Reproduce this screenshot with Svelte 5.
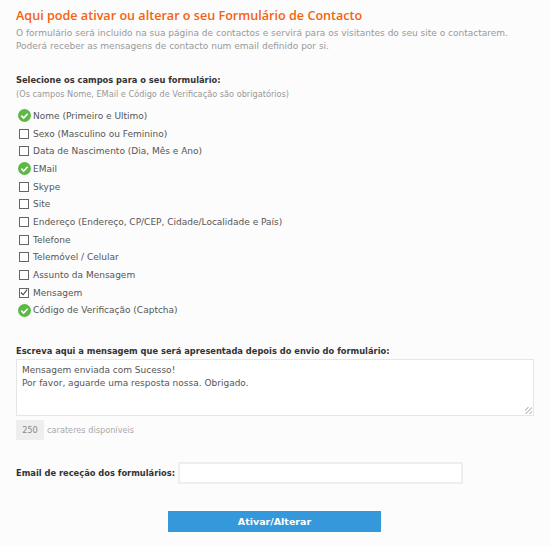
<script>
  const fields = [
    { label: "Nome (Primeiro e Ultimo)", state: "required" },
    { label: "Sexo (Masculino ou Feminino)", state: "off" },
    { label: "Data de Nascimento (Dia, Mês e Ano)", state: "off" },
    { label: "EMail", state: "required" },
    { label: "Skype", state: "off" },
    { label: "Site", state: "off" },
    { label: "Endereço (Endereço, CP/CEP, Cidade/Localidade e País)", state: "off" },
    { label: "Telefone", state: "off" },
    { label: "Telemóvel / Celular", state: "off" },
    { label: "Assunto da Mensagem", state: "off" },
    { label: "Mensagem", state: "on" },
    { label: "Código de Verificação (Captcha)", state: "required" }
  ];
  let message = "Mensagem enviada com Sucesso!\nPor favor, aguarde uma resposta nossa. Obrigado.";
</script>

<div class="page">
  <h1>Aqui pode ativar ou alterar o seu Formulário de Contacto</h1>
  <p class="intro">
    O formulário será incluido na sua página de contactos e servirá para os visitantes do seu site o contactarem.<br />
    Poderá receber as mensagens de contacto num email definido por si.
  </p>

  <h2>Selecione os campos para o seu formulário:</h2>
  <p class="note">(Os campos Nome, EMail e Código de Verificação são obrigatórios)</p>

  <ul>
    {#each fields as f}
      <li>
        <span class="mark">
          {#if f.state === "required"}
            <svg width="13" height="13" viewBox="0 0 14 14">
              <circle cx="7" cy="7" r="7" fill="#5cb947" />
              <path d="M3.6 7.2l2.5 2.5 4.3-4.6" fill="none" stroke="#fff" stroke-width="1.8" />
            </svg>
          {:else}
            <span class="box">
              {#if f.state === "on"}
                <svg width="9" height="9" viewBox="0 0 9 9">
                  <path d="M1 4.5l2.5 2.5L8 1.2" fill="none" stroke="#444" stroke-width="1.2" />
                </svg>
              {/if}
            </span>
          {/if}
        </span>
        <span>{f.label}</span>
      </li>
    {/each}
  </ul>

  <h2 class="msg-title">Escreva aqui a mensagem que será apresentada depois do envio do formulário:</h2>
  <textarea bind:value={message}></textarea>
  <div class="counter">
    <span class="count">250</span>
    <span class="left">carateres disponíveis</span>
  </div>

  <div class="email">
    <label for="email">Email de receção dos formulários:</label>
    <input id="email" type="text" />
  </div>

  <div class="actions">
    <button type="button">Ativar/Alterar</button>
  </div>
</div>

<style>
  :global(body) {
    background: #fcfcfc;
  }
  .page {
    box-sizing: border-box;
    width: 550px;
    height: 546px;
    padding: 8px 17px 0 16px;
    font-family: "DejaVu Sans", Verdana, sans-serif;
    font-size: 9px;
    color: #555;
    overflow: hidden;
  }
  h1 {
    margin: 0;
    font-family: "Open Sans", sans-serif;
    font-size: 12.6px;
    line-height: 16px;
    font-weight: 600;
    color: #f5620f;
  }
  .intro {
    margin: 3px 0 0;
    line-height: 13px;
    color: #999;
  }
  h2 {
    margin: 21px 0 0;
    font-size: 8.3px;
    line-height: 13px;
    font-weight: 700;
    color: #333;
  }
  .note {
    margin: 1px 0 0;
    font-size: 8.2px;
    line-height: 12px;
    color: #999;
  }
  ul {
    list-style: none;
    margin: 7px 0 0;
    padding: 0;
  }
  li {
    display: flex;
    align-items: center;
    gap: 2px;
    height: 17.7px;
  }
  .mark {
    width: 14px;
    height: 14px;
    display: flex;
    align-items: center;
    justify-content: center;
    flex: none;
    margin-left: 1px;
  }
  .box {
    box-sizing: border-box;
    width: 10px;
    height: 10px;
    border: 1px solid #666;
    background: #fff;
    display: flex;
    align-items: center;
    justify-content: center;
  }
  .msg-title {
    margin-top: 26px;
  }
  textarea {
    display: block;
    box-sizing: border-box;
    width: 518px;
    height: 57px;
    margin: 1px 0 0;
    padding: 4px 5px;
    border: 1px solid #e6e6e6;
    background: #fff;
    font: inherit;
    line-height: 13px;
    color: #555;
    outline: none;
  }
  textarea::-webkit-resizer {
    background: repeating-linear-gradient(135deg, transparent 0 1.5px, #ccc 1.5px 3px) right 1px bottom 1px / 7px 7px no-repeat;
  }
  .counter {
    display: flex;
    align-items: center;
    gap: 3px;
    margin-top: 4px;
  }
  .count {
    width: 28px;
    height: 20px;
    line-height: 20px;
    text-align: center;
    background: #eee;
    font-size: 8.2px;
    color: #888;
  }
  .left {
    font-size: 8.2px;
    color: #aaa;
  }
  .email {
    display: flex;
    align-items: center;
    gap: 3px;
    margin-top: 22px;
  }
  label {
    font-size: 8.3px;
    font-weight: 700;
    color: #333;
  }
  input {
    box-sizing: border-box;
    width: 285px;
    height: 22px;
    padding: 0 5px;
    border: 2px solid #eee;
    background: #fff;
    outline: none;
  }
  .actions {
    display: flex;
    justify-content: center;
    margin-top: 27px;
  }
  button {
    width: 213px;
    height: 21px;
    padding: 0;
    border: none;
    background: #3498db;
    color: #fff;
    font: inherit;
    font-size: 9.5px;
    font-weight: 700;
  }
</style>
